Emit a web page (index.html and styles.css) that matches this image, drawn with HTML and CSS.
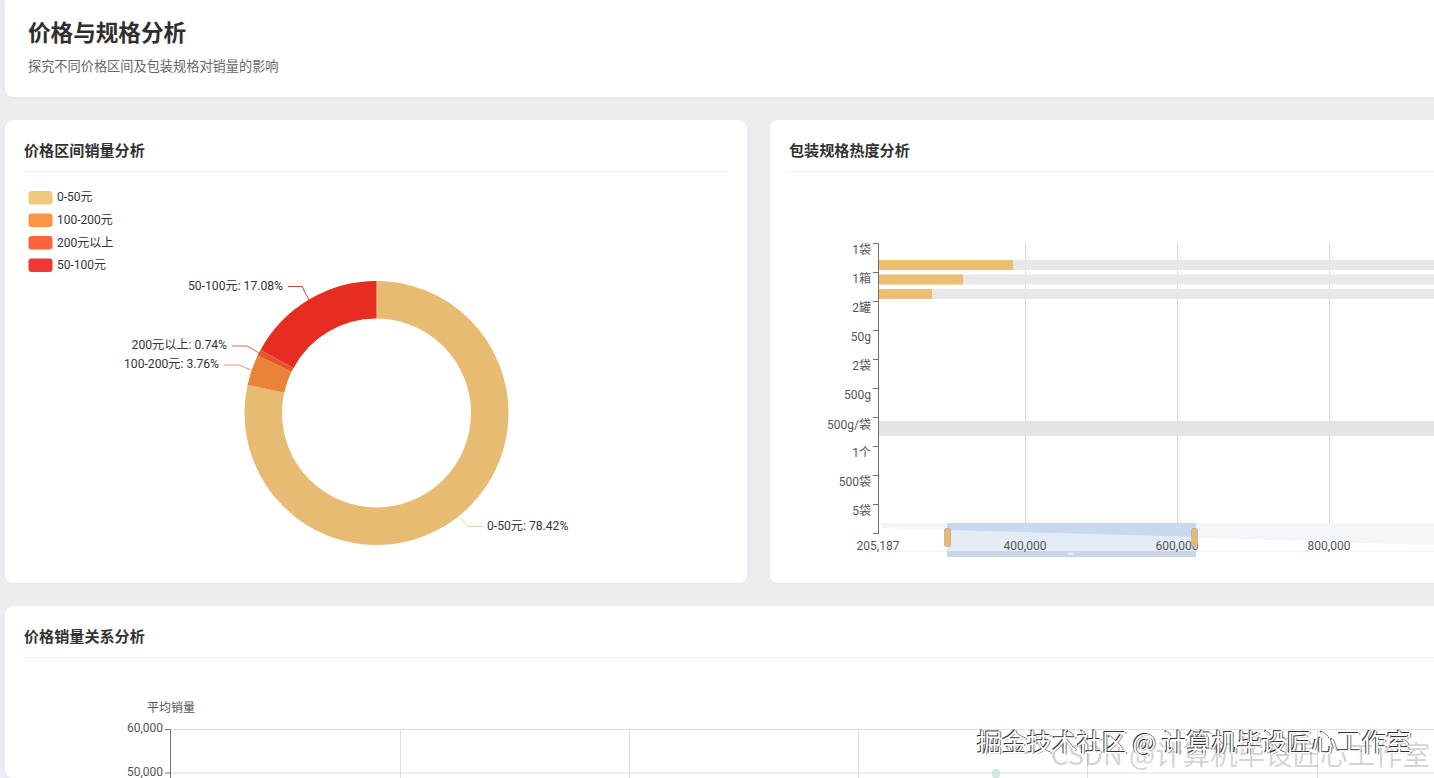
FILE: index.html
```html
<!DOCTYPE html>
<html lang="zh">
<head>
<meta charset="utf-8">
<title>价格与规格分析</title>
<link rel="stylesheet" href="styles.css">
</head>
<body>
<main class="page">
  <header class="panel page-head">
    <h1>价格与规格分析</h1>
    <p>探究不同价格区间及包装规格对销量的影响</p>
  </header>
  <section class="row">
    <article class="panel card">
      <h2>价格区间销量分析</h2>
      <svg class="chart" viewBox="24 172 705 401" width="705" height="401">
        <g class="legend">
          <rect x="28.5" y="191" width="24" height="13.5" rx="3" fill="#f0c87c"/><text x="57" y="201">0-50元</text>
          <rect x="28.5" y="213.5" width="24" height="13.5" rx="3" fill="#fb9449"/><text x="57" y="224">100-200元</text>
          <rect x="28.5" y="236" width="24" height="13.5" rx="3" fill="#fb6539"/><text x="57" y="246.5">200元以上</text>
          <rect x="28.5" y="258.5" width="24" height="13.5" rx="3" fill="#ef3835"/><text x="57" y="269">50-100元</text>
        </g>
        <g fill="none" stroke-width="37.5" transform="rotate(-90 376.5 413)">
          <circle cx="376.5" cy="413" r="113.25" pathLength="100" stroke="#e8bb72" stroke-dasharray="78.42 100"/>
          <circle cx="376.5" cy="413" r="113.25" pathLength="100" stroke="#e98338" stroke-dasharray="3.76 100" stroke-dashoffset="-78.42"/>
          <circle cx="376.5" cy="413" r="113.25" pathLength="100" stroke="#e6552a" stroke-dasharray="0.74 100" stroke-dashoffset="-82.18"/>
          <circle cx="376.5" cy="413" r="113.25" pathLength="100" stroke="#e52e21" stroke-dasharray="17.08 100" stroke-dashoffset="-82.92"/>
        </g>
        <g fill="none">
          <polyline points="288,286.5 302,286.5 309,300" stroke="#c9473f"/>
          <polyline points="232,346 247,346 259,353" stroke="#d2704d"/>
          <polyline points="224,365 239,365 251,370" stroke="#e39a68"/>
          <polyline points="460,517 468,526.5 483,526.5" stroke="#efd4a4"/>
        </g>
        <g class="label">
          <text x="283" y="290" text-anchor="end">50-100元: 17.08%</text>
          <text x="227" y="349" text-anchor="end">200元以上: 0.74%</text>
          <text x="219" y="368" text-anchor="end">100-200元: 3.76%</text>
          <text x="487" y="530">0-50元: 78.42%</text>
        </g>
      </svg>
    </article>
    <article class="panel card">
      <h2>包装规格热度分析</h2>
      <svg class="chart" viewBox="789 172 705 401" width="705" height="401">
        <g stroke="#d8dade">
          <line x1="1025.5" y1="243" x2="1025.5" y2="534"/>
          <line x1="1177.5" y1="243" x2="1177.5" y2="534"/>
          <line x1="1329.5" y1="243" x2="1329.5" y2="534"/>
        </g>
        <g fill="#e8e8e8">
          <rect x="879" y="260" width="615" height="10"/>
          <rect x="879" y="274.5" width="615" height="10"/>
          <rect x="879" y="289" width="615" height="10"/>
          <rect x="879" y="421" width="615" height="15" fill="#e4e4e4"/>
        </g>
        <g fill="#ecbd72">
          <rect x="878" y="260" width="135" height="10"/>
          <rect x="878" y="274.5" width="85" height="10"/>
          <rect x="878" y="289" width="54" height="10"/>
        </g>
        <path class="axis" d="M873 243.5H878.5V534M873 272.5H878.5M873 301.5H878.5M873 330.5H878.5M873 359.5H878.5M873 388.5H878.5M873 417.5H878.5M873 446.5H878.5M873 475.5H878.5M873 504.5H878.5M873 533.5H878.5"/>
        <g class="tick" text-anchor="end">
          <text x="871" y="253.5">1袋</text>
          <text x="871" y="282.5">1箱</text>
          <text x="871" y="311.5">2罐</text>
          <text x="871" y="341">50g</text>
          <text x="871" y="370">2袋</text>
          <text x="871" y="399">500g</text>
          <text x="871" y="428.5">500g/袋</text>
          <text x="871" y="457">1个</text>
          <text x="871" y="486">500袋</text>
          <text x="871" y="515">5袋</text>
        </g>
        <path d="M881 523H1494V551H881Z" fill="#f3f5f9"/>
        <path d="M881 528L1494 547V551H881Z" fill="#fff"/>
        <line x1="881" y1="551" x2="1494" y2="551" stroke="#eceef2"/>
        <path d="M947 530L1196 537V551H947Z" fill="#e3ecf5"/>
        <path d="M947 523H1196V537L947 530Z" fill="#c8d8ee"/>
        <rect x="947" y="551" width="249" height="6" fill="#ccd5e6"/>
        <rect x="1068" y="552.5" width="6" height="2.5" rx="1" fill="#e8edf5"/>
        <g class="tick" text-anchor="middle">
          <text x="878" y="549.5">205,187</text>
          <text x="1025" y="549.5">400,000</text>
          <text x="1177" y="549.5">600,000</text>
          <text x="1329" y="549.5">800,000</text>
        </g>
        <g class="handles">
          <rect x="944.5" y="528.5" width="6" height="18" rx="1.5"/>
          <rect x="1191.5" y="528.5" width="6" height="18" rx="1.5"/>
        </g>
      </svg>
    </article>
  </section>
  <section class="panel card wide">
    <h2>价格销量关系分析</h2>
    <svg class="chart" viewBox="24 658 1485 120" width="1485" height="120">
      <g stroke="#dcdee2" fill="none">
        <path d="M171 729.5H1500M171 773H1500"/>
        <path d="M400.5 729V778M629.5 729V778M858.5 729V778M1087.5 729V778M1317.5 729V778"/>
      </g>
      <path class="axis" d="M165 729.5H170.5V778M165 773H170.5"/>
      <rect x="992" y="769" width="8" height="9" rx="3" fill="#cfe8e2"/>
      <g class="tick">
        <text x="171" y="712" text-anchor="middle">平均销量</text>
        <text x="163" y="732" text-anchor="end">60,000</text>
        <text x="163" y="776" text-anchor="end">50,000</text>
      </g>
    </svg>
  </section>
</main>
<div class="mark mark-csdn">CSDN @计算机毕设匠心工作室</div>
<div class="mark mark-juejin">掘金技术社区 @ 计算机毕设匠心工作室</div>
</body>
</html>
```
FILE: styles.css
```css
html, body {
  margin: 0;
  height: 778px;
  overflow: hidden;
  background: #ebedf1;
  font-family: Roboto, "Noto Sans CJK SC", sans-serif;
}
.page {
  width: 1509px;
  padding-left: 5px;
  display: flex;
  flex-direction: column;
  gap: 23px;
}
.panel {
  background: #fff;
  border-radius: 8px;
  box-shadow: 0 1px 3px rgba(0, 0, 0, .03);
}
.page-head {
  height: 97px;
  box-sizing: border-box;
  padding: 19px 23px 0;
  border-radius: 0 0 8px 8px;
}
h1 {
  margin: 0;
  font-size: 22.6px;
  line-height: 30px;
  font-weight: 700;
  color: #2f2f2f;
}
.page-head p {
  margin: 8.5px 0 0;
  font-size: 13.2px;
  line-height: 18px;
  color: #666;
}
.row {
  display: grid;
  grid-template-columns: 742px 743px;
  gap: 23px;
}
.card {
  box-sizing: border-box;
  height: 463px;
  padding: 19px 18px 0 19px;
}
.wide {
  height: 172px;
}
h2 {
  margin: 0;
  padding-bottom: 8px;
  height: 24px;
  line-height: 24px;
  box-sizing: content-box;
  border-bottom: 1px solid #f0f0f0;
  font-size: 15.1px;
  font-weight: 700;
  color: #333;
}
.chart {
  display: block;
  font-size: 12px;
}
.legend text, .label text {
  fill: #333;
}
.label text {
  font-size: 12.15px;
}
.tick text {
  fill: #555;
}
.axis {
  fill: none;
  stroke: #6e7079;
}
.handles {
  fill: #e8bb72;
  stroke: #a9a49a;
  stroke-width: .6;
}
.mark {
  position: absolute;
  white-space: nowrap;
  font-family: "Noto Sans CJK SC", sans-serif;
}
.mark-csdn {
  right: 4px;
  top: 734px;
  font-size: 27.5px;
  line-height: 38px;
  color: rgba(150, 150, 150, .42);
}
.mark-juejin {
  left: 977px;
  top: 724px;
  font-size: 25px;
  line-height: 34px;
  color: #fff;
  text-shadow: -1px -1px 0 #333, 1px 0 0 #777;
}
```
